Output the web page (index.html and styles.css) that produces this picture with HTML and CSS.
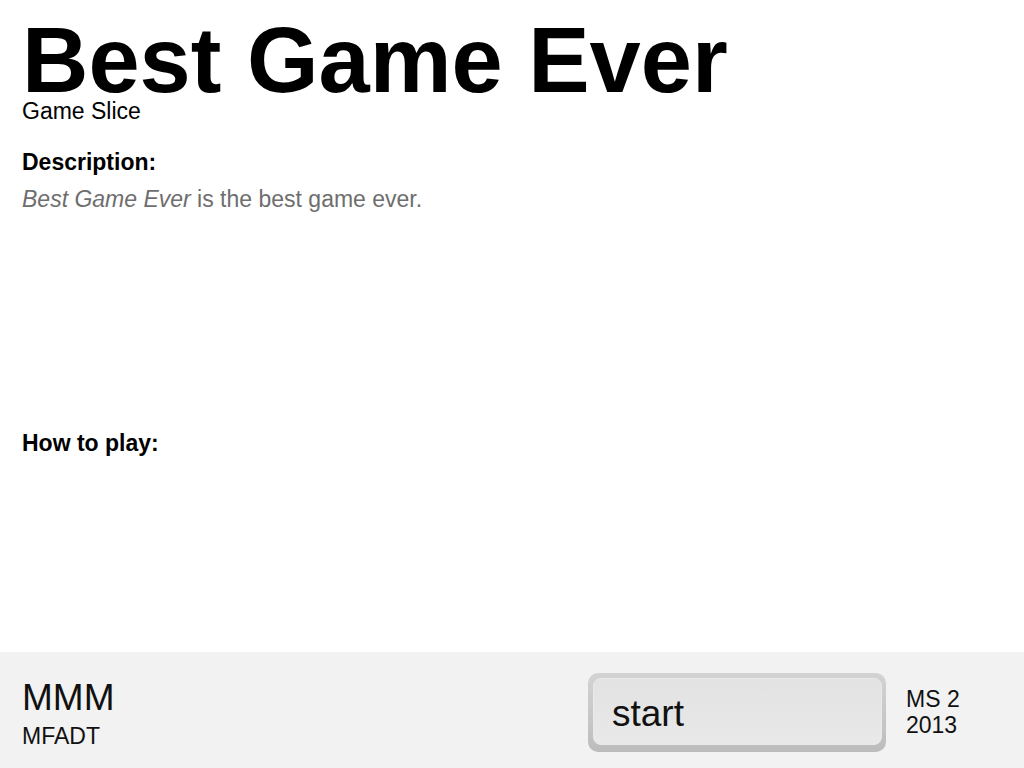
FILE: index.html
```html
<!DOCTYPE html>
<html>
<head>
<meta charset="utf-8">
<title>Best Game Ever</title>
<link rel="stylesheet" href="styles.css">
</head>
<body>
<main class="main">
  <h1 class="title">Best Game Ever</h1>
  <div class="subtitle">Game Slice</div>
  <section class="desc">
    <h2 class="label">Description:</h2>
    <p class="desc-text"><em>Best Game Ever</em> is the best game ever.</p>
  </section>
  <section class="howto">
    <h2 class="label">How to play:</h2>
  </section>
</main>
<footer class="footer">
  <div class="credits">
    <div class="team">MMM</div>
    <div class="school">MFADT</div>
  </div>
  <div class="btn-outer">
    <div class="btn-inner">start</div>
  </div>
  <div class="ms">
    <div>MS 2</div>
    <div>2013</div>
  </div>
</footer>
</body>
</html>
```
FILE: styles.css
```css
html, body {
  margin: 0;
  padding: 0;
}
body {
  height: 100vh;
  display: flex;
  flex-direction: column;
  font-family: "Liberation Sans", Arial, sans-serif;
  color: #000;
  background: #fff;
}
.main {
  flex: 1;
  padding: 20px 22px 0;
}
.title {
  margin: 0;
  font-size: 92px;
  line-height: 80px;
  font-weight: bold;
}
.subtitle {
  margin-top: 1px;
  font-size: 23px;
  line-height: 20px;
}
.label {
  margin: 0;
  font-size: 23px;
  line-height: 26px;
  font-weight: bold;
}
.desc {
  margin-top: 28px;
  height: 281px;
}
.desc-text {
  margin: 11px 0 0;
  font-size: 23px;
  line-height: 26px;
  color: #6e6e6e;
}
.footer {
  height: 116px;
  background: #f2f2f2;
  display: grid;
  grid-template-columns: 566px 298px auto;
  padding-left: 22px;
  align-items: start;
}
.credits {
  padding-top: 26px;
}
.team {
  font-size: 37px;
  line-height: 40px;
  color: #111;
}
.school {
  margin-top: 5px;
  font-size: 23px;
  line-height: 26px;
  color: #111;
}
.btn-outer {
  margin-top: 21px;
  height: 79px;
  box-sizing: border-box;
  padding: 5px 4px 7px 5px;
  border-radius: 10px;
  background: linear-gradient(#d3d3d3, #c4c4c4 70%, #bcbcbc);
}
.btn-inner {
  box-sizing: border-box;
  height: 67px;
  border: 1px solid #eaeaea;
  border-radius: 8px;
  background: linear-gradient(#e2e2e2, #e6e6e6 60%, #e9e9e9);
  padding: 4px 0 0 18px;
  font-size: 37px;
  line-height: 61px;
  color: #111;
}
.ms {
  margin-top: 34px;
  margin-left: 20px;
  font-size: 23px;
  line-height: 26px;
  color: #111;
}
```
